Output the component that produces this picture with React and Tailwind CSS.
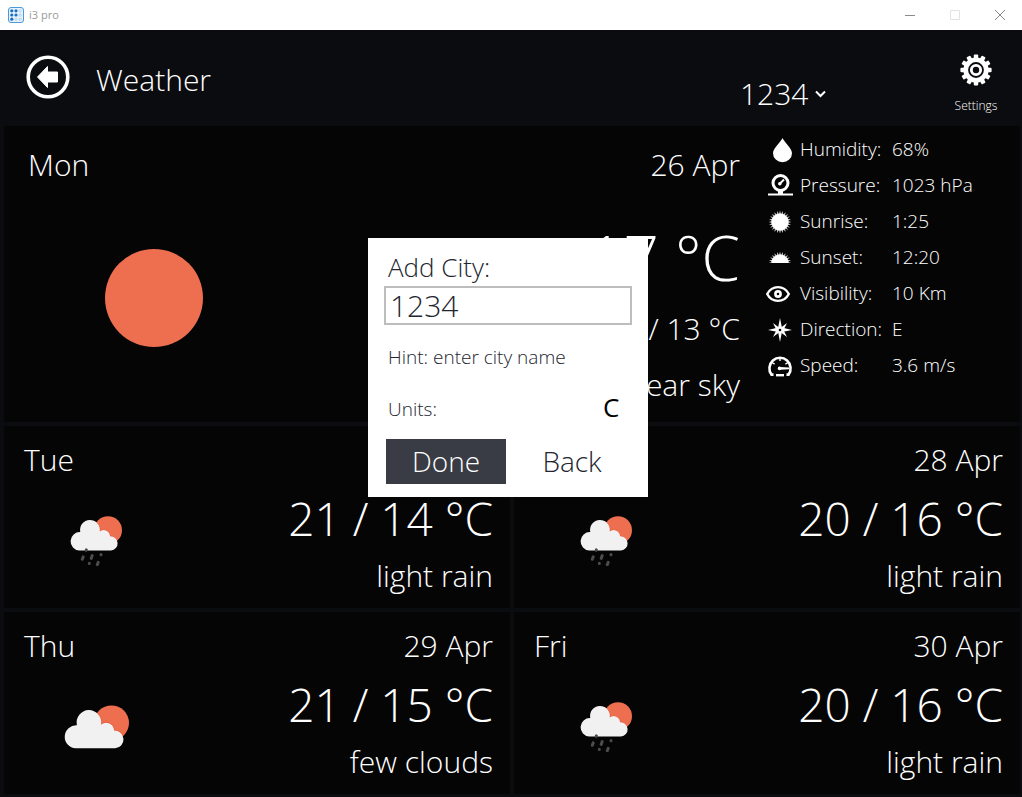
import { useState } from 'react';

const days = [
    { day: 'Tue', date: '27 Apr', temp: '21 / 14 °C', text: 'light rain', icon: 'rain' },
    { day: 'Wed', date: '28 Apr', temp: '20 / 16 °C', text: 'light rain', icon: 'rain' },
    { day: 'Thu', date: '29 Apr', temp: '21 / 15 °C', text: 'few clouds', icon: 'clouds' },
    { day: 'Fri', date: '30 Apr', temp: '20 / 16 °C', text: 'light rain', icon: 'rain' },
];

const details = [
    { label: 'Humidity:', value: '68%', icon: 'humidity' },
    { label: 'Pressure:', value: '1023 hPa', icon: 'pressure' },
    { label: 'Sunrise:', value: '1:25', icon: 'sunrise' },
    { label: 'Sunset:', value: '12:20', icon: 'sunset' },
    { label: 'Visibility:', value: '10 Km', icon: 'visibility' },
    { label: 'Direction:', value: 'E', icon: 'direction' },
    { label: 'Speed:', value: '3.6 m/s', icon: 'speed' },
];

const rays = (cx, cy, inner, outer, count) => {
    const points = [];
    for (let i = 0; i < count * 2; i++) {
        const r = i % 2 ? inner : outer;
        const a = (Math.PI * i) / count - Math.PI / 2;
        points.push(`${(cx + r * Math.cos(a)).toFixed(2)},${(cy + r * Math.sin(a)).toFixed(2)}`);
    }
    return points.join(' ');
};

const detailIcons = {
    humidity: <path d="M16.5 7C18 11 26 17 26 22.2a9.5 9 0 0 1-19 0C7 17 15 11 16.5 7Z" fill="currentColor" />,
    pressure: (
        <g fill="none" stroke="currentColor">
            <circle cx="14.5" cy="16" r="7.5" strokeWidth="3" />
            <path d="M14.5 24v3" strokeWidth="5" />
            <path d="M2 27.5h25" strokeWidth="2" />
            <path d="M13.5 17l4.5-4.5" strokeWidth="2" />
            <circle cx="13.8" cy="16.8" r="1.8" fill="currentColor" stroke="none" />
        </g>
    ),
    sunrise: (
        <g fill="currentColor">
            <circle cx="14" cy="19" r="8.6" />
            <polygon points={rays(14, 19, 8, 11.4, 24)} opacity="0.75" />
        </g>
    ),
    sunset: (
        <g fill="currentColor">
            <path d="M5.4 24a8.6 8.6 0 0 1 17.2 0Z" />
            <polygon points={rays(14, 24, 8, 11.4, 24)} clipPath="url(#horizon)" opacity="0.75" />
        </g>
    ),
    visibility: (
        <g fill="none" stroke="currentColor">
            <path d="M1.2 19C6 9.8 18 9.8 22.8 19 18 28.2 6 28.2 1.2 19Z" strokeWidth="2.4" />
            <circle cx="12" cy="19" r="2.6" strokeWidth="2.6" />
        </g>
    ),
    direction: (
        <g fill="currentColor">
            <path d="M14 7l1.9 9.5L26 19l-10.1 2L14 31l-1.9-10L2 19l10.1-2.5Z" />
            <path d="M7 12l6 4.5-2.5 2.5ZM21 12l-6 4.5 2.5 2.5ZM7 26l6-4.5-2.5-2.5ZM21 26l-6-4.5 2.5-2.5Z" />
            <circle cx="14" cy="19" r="1.3" fill="#050505" />
        </g>
    ),
    speed: (
        <g fill="none" stroke="currentColor">
            <path d="M7.5 27.6H5.4a10.6 10.6 0 1 1 17.2 0h-2.1" strokeWidth="2.6" />
            <path d="M10 28.2h8" strokeWidth="2.4" />
            <path d="M14 20l9 .6v1.6l-9 .6Z" fill="currentColor" stroke="none" />
            <circle cx="13.5" cy="21.4" r="1.8" fill="currentColor" stroke="none" />
            <path d="M6 15.5l2.6 1.6M14 11v3M22 15.5l-2.6 1.6" strokeWidth="1.4" />
        </g>
    ),
};

const Cloud = () => (
    <>
        <circle cx="38" cy="14.2" r="14" fill="#ed6f4f" />
        <path
            d="M9.3 34.5a9.2 9.2 0 0 1 1-18.4 9.9 9.9 0 1 1 19.4-.5 6.3 6.3 0 0 1 10.3 4.7 7.1 7.1 0 0 1 1 14.2Z"
            fill="#f1f1f1"
            stroke="#e8512f"
            strokeWidth="1"
            clipPath="url(#sunside)"
        />
        <path
            d="M9.3 34.5a9.2 9.2 0 0 1 1-18.4 9.9 9.9 0 1 1 19.4-.5 6.3 6.3 0 0 1 10.3 4.7 7.1 7.1 0 0 1 1 14.2Z"
            fill="#f1f1f1"
        />
    </>
);

const WeatherIcon = ({ name }) => {
    if (name === 'clouds') {
        return (
            <svg viewBox="0 0 52 35" className="w-[65px] h-[44px]" aria-hidden="true">
                <Cloud />
            </svg>
        );
    }
    return (
        <svg viewBox="0 0 52 50" className="w-[52px] h-[50px]" aria-hidden="true">
            <Cloud />
            <g stroke="#4c4c4c" strokeWidth="3" strokeLinecap="round">
                <path d="M13.2 40.9l-.9 2.4M22.2 39.6l-1 2.8M28.2 46.3l-.9 2.4" />
                <path d="M31 38.6v.1M19.3 47.3v.1M16.4 33.8l-.2.6" />
            </g>
        </svg>
    );
};

const TitleBar = () => (
    <div className="flex h-[30px] items-center bg-white pl-2">
        <svg viewBox="0 0 16 16" className="size-4" aria-hidden="true">
            <rect x="0.5" y="0.5" width="15" height="15" rx="2.5" fill="#e8f3fc" stroke="#4a97dc" />
            <g fill="#1b6fc4">
                <circle cx="3.8" cy="3.8" r="1.6" />
                <circle cx="8" cy="3.8" r="1.6" />
                <circle cx="3.8" cy="8" r="1.6" />
                <circle cx="8" cy="8" r="1.6" />
                <circle cx="3.8" cy="12.2" r="1.6" />
            </g>
            <g fill="none" stroke="#a9cdee" strokeWidth="0.8">
                <circle cx="12.2" cy="3.8" r="1.2" />
                <circle cx="12.2" cy="8" r="1.2" />
                <circle cx="8" cy="12.2" r="1.2" />
                <circle cx="12.2" cy="12.2" r="1.2" />
            </g>
        </svg>
        <span className="ml-[5px] text-[11px] font-normal text-[#999999]">i3 pro</span>
        <div className="ml-auto flex text-[#8a8a8a]">
            <button aria-label="Minimize" className="flex h-[28px] w-[45px] items-center justify-center">
                <svg viewBox="0 0 10 10" className="size-[10px]" stroke="currentColor"><path d="M0 5.5h10" /></svg>
            </button>
            <button aria-label="Maximize" disabled className="flex h-[28px] w-[45px] items-center justify-center text-[#e2e2e2]">
                <svg viewBox="0 0 10 10" className="size-[10px]" fill="none" stroke="currentColor"><path d="M.5.5h9v9h-9Z" /></svg>
            </button>
            <button aria-label="Close" className="flex h-[28px] w-[45px] items-center justify-center">
                <svg viewBox="0 0 10 10" className="size-[10px]" stroke="currentColor"><path d="M0 0l10 10M10 0L0 10" /></svg>
            </button>
        </div>
    </div>
);

const Header = () => (
    <header className="flex h-[96px] items-start">
        <button aria-label="Go back" className="mt-[25px] ml-[26px]">
            <svg viewBox="0 0 44 44" className="size-[44px]">
                <circle cx="22" cy="22" r="19.8" fill="none" stroke="white" strokeWidth="3.6" />
                <path
                    d="M11.5 22L21.5 11.5V17h10v10h-10v5.5Z"
                    fill="white"
                    stroke="white"
                    strokeLinejoin="round"
                />
            </svg>
        </button>
        <h1 className="mt-[30px] ml-[26px] text-[30px] leading-[40px]">Weather</h1>
        <div className="mt-[44px] ml-auto flex items-center gap-[6px]">
            <select aria-label="City" className="appearance-none bg-transparent text-[30px] leading-[40px]" defaultValue="1234">
                <option value="1234">1234</option>
            </select>
            <svg viewBox="0 0 11 8" className="h-[8px] w-[11px]" fill="none" stroke="white" strokeWidth="2" aria-hidden="true">
                <path d="M1 1.5l4.5 4.5L10 1.5" />
            </svg>
        </div>
        <button className="mt-[24px] ml-[104px] flex w-[92px] flex-col items-center">
            <svg viewBox="-16 -16 32 32" className="size-[32px]" aria-hidden="true">
                <g fill="white">
                    <circle r="12.6" />
                    {[0, 30, 60, 90, 120, 150].map((angle) => (
                        <rect key={angle} x="-2.2" y="-15.6" width="4.4" height="31.2" rx="1" transform={`rotate(${angle})`} />
                    ))}
                </g>
                <circle r="7" fill="none" stroke="#0b0c10" strokeWidth="1.8" />
                <circle r="3.2" fill="#0b0c10" />
            </svg>
            <span className="mt-[10px] text-[12px] leading-[20px]">Settings</span>
        </button>
    </header>
);

const DetailRow = ({ label, value, icon }) => (
    <div className="flex h-9 items-center text-[19px] leading-[36px]">
        <svg viewBox="0 0 28 36" className="h-9 w-7" aria-hidden="true">
            <clipPath id="horizon"><path d="M0 0h28v24H0Z" /></clipPath>
            {detailIcons[icon]}
        </svg>
        <dt className="ml-[6px] w-[92px] whitespace-nowrap">{label}</dt>
        <dd className="whitespace-nowrap">{value}</dd>
    </div>
);

const DayCard = ({ day, date, temp, text, icon }) => (
    <section className="flex justify-between bg-[#050505] pt-[14px] pr-[17px] pl-5">
        <div>
            <h2 className="text-[30px] leading-[40px]">{day}</h2>
            <div className="mt-9 flex h-[50px] w-[144px] items-center justify-center">
                <WeatherIcon name={icon} />
            </div>
        </div>
        <div className="text-right whitespace-nowrap">
            <p className="text-[30px] leading-[40px]">{date}</p>
            <p className="mt-[6px] text-[46px] leading-[64px]">{temp}</p>
            <p className="mt-[6px] text-[30px] leading-[40px]">{text}</p>
        </div>
    </section>
);

const AddCityDialog = ({ onClose }) => {
    const [city, setCity] = useState('1234');

    return (
        <div className="absolute inset-0 flex items-start justify-center pt-[238px] pr-[6px]">
            <form
                role="dialog"
                aria-label="Add City"
                onSubmit={(e) => {
                    e.preventDefault();
                    onClose();
                }}
                className="w-[280px] bg-white px-4 pt-[10px] pb-[13px] text-[#23262f]"
            >
                <label htmlFor="city" className="ml-1 block text-[26px] leading-[38px]">Add City:</label>
                <input
                    id="city"
                    value={city}
                    onChange={(e) => setCity(e.target.value)}
                    className="block h-[39px] w-full border-2 border-[#bdbdbd] px-1 text-[30px] leading-[35px] outline-none"
                />
                <p className="mt-[18px] ml-1 text-[19px] leading-[28px]">Hint: enter city name</p>
                <div className="mt-6 ml-1 flex h-[28px] items-start justify-between pr-3">
                    <label htmlFor="units" className="text-[19px] leading-[28px]">Units:</label>
                    <select id="units" className="h-[24px] appearance-none bg-transparent text-[26px] leading-[24px] font-normal text-black" defaultValue="C">
                        <option value="C">C</option>
                        <option value="F">F</option>
                    </select>
                </div>
                <div className="mt-4 ml-[2px] flex gap-[6px]">
                    <button type="submit" className="h-[45px] w-[120px] bg-[#393c45] text-[28px] leading-[45px] text-white">Done</button>
                    <button type="button" onClick={onClose} className="h-[45px] w-[120px] text-[28px] leading-[45px]">Back</button>
                </div>
            </form>
        </div>
    );
};

const App = () => {
    const [dialogOpen, setDialogOpen] = useState(true);

    return (
        <div className="relative flex min-h-screen flex-col bg-[#0b0c10] font-['Open_Sans',sans-serif] font-light text-white">
            <svg className="absolute size-0" aria-hidden="true">
                <clipPath id="sunside"><circle cx="38" cy="14.2" r="14" /></clipPath>
            </svg>
            <TitleBar />
            <Header />
            <main className="grid flex-1 grid-cols-2 grid-rows-[296fr_182fr_182fr] gap-1 pr-[2px] pb-[3px] pl-1">
                <section className="col-span-2 flex bg-[#050505] pl-6">
                    <div className="pt-[19px]">
                        <h2 className="text-[30px] leading-[40px]">Mon</h2>
                        <div className="mt-16 flex w-[252px] justify-center">
                            <svg viewBox="0 0 98 98" className="size-[98px]" aria-hidden="true">
                                <circle cx="49" cy="49" r="49" fill="#ed6f4f" />
                            </svg>
                        </div>
                    </div>
                    <div className="flex-1 pt-[19px] text-right whitespace-nowrap">
                        <p className="text-[30px] leading-[40px]">26 Apr</p>
                        <p className="mt-8 text-[62px] leading-[80px]">17 °C</p>
                        <p className="mt-3 text-[30px] leading-[40px]">17 / 13 °C</p>
                        <p className="mt-4 text-[30px] leading-[40px]">clear sky</p>
                    </div>
                    <dl className="w-[280px] shrink-0 pt-[5px] pl-[26px]">
                        {details.map((row) => (
                            <DetailRow key={row.label} {...row} />
                        ))}
                    </dl>
                </section>
                {days.map((day) => (
                    <DayCard key={day.day} {...day} />
                ))}
            </main>
            {dialogOpen && <AddCityDialog onClose={() => setDialogOpen(false)} />}
        </div>
    );
};

export default App;
